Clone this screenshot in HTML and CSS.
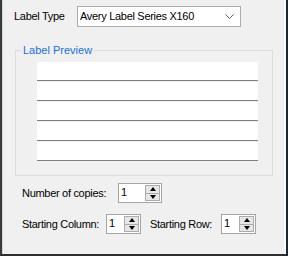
FILE: index.html
```html
<!DOCTYPE html>
<html lang="en">
<head>
    <meta charset="UTF-8">
    <title>Print Labels</title>
    <link rel="stylesheet" href="styles.css">
</head>
<body>
    <div class="window">
        <div class="type-row">
            <span class="caption type-caption">Label Type</span>
            <div class="combo">
                <span class="combo-text">Avery Label Series X160</span>
                <svg class="chevron" width="9" height="5" viewBox="0 0 9 5">
                    <polyline points="0.5,0.5 4.5,4.5 8.5,0.5" fill="none" stroke="#606060" stroke-width="1"/>
                </svg>
            </div>
        </div>

        <fieldset class="group">
            <legend>Label Preview</legend>
            <div class="preview">
                <div class="label-row"></div>
                <div class="label-row"></div>
                <div class="label-row"></div>
                <div class="label-row"></div>
                <div class="label-row"></div>
            </div>
        </fieldset>

        <div class="field-row first">
            <span class="caption copies-caption">Number of copies:</span>
            <div class="spinner wide">
                <span class="spin-value">1</span>
                <div class="spin-buttons">
                    <div class="spin-btn"><span class="arrow up"></span></div>
                    <div class="spin-btn"><span class="arrow down"></span></div>
                </div>
            </div>
        </div>

        <div class="field-row">
            <span class="caption column-caption">Starting Column:</span>
            <div class="spinner">
                <span class="spin-value">1</span>
                <div class="spin-buttons">
                    <div class="spin-btn"><span class="arrow up"></span></div>
                    <div class="spin-btn"><span class="arrow down"></span></div>
                </div>
            </div>
            <span class="caption row-caption">Starting Row:</span>
            <div class="spinner">
                <span class="spin-value">1</span>
                <div class="spin-buttons">
                    <div class="spin-btn"><span class="arrow up"></span></div>
                    <div class="spin-btn"><span class="arrow down"></span></div>
                </div>
            </div>
        </div>
    </div>
</body>
</html>
```

FILE: styles.css
```css
* {
    margin: 0;
    padding: 0;
    box-sizing: border-box;
    font-family: 'Liberation Sans', Arial, sans-serif;
}

body {
    width: 288px;
    height: 256px;
    overflow: hidden;
}

.window {
    width: 288px;
    height: 256px;
    background: #f0f0f0;
    border-left: 2px solid #3a3a3a;
    border-right: 2px solid #1e2738;
    border-bottom: 2px solid #2e2e2e;
    box-shadow: inset 1px 0 0 #d6d6d6, inset -2px 0 0 #fbfbfb;
    font-size: 11px;
    letter-spacing: -0.3px;
    color: #000;
}

.caption {
    display: inline-block;
    line-height: 13px;
    white-space: nowrap;
}

/* label type */
.type-row {
    display: flex;
    align-items: center;
    padding: 6px 0 0 12px;
}

.type-caption {
    width: 63px;
}

.combo {
    width: 164px;
    height: 21px;
    background: #fff;
    border: 1px solid #acacac;
    display: flex;
    align-items: center;
    justify-content: space-between;
    padding: 0 6px 0 2px;
}

.combo-text {
    line-height: 13px;
}

/* group box */
.group {
    margin: 17px 13px 0 13px;
    border: 1px solid #dcdcdc;
    padding: 6px 14px 13px 5px;
}

.group legend {
    padding: 0 2px;
    color: #1a6fd8;
    line-height: 12px;
    letter-spacing: 0;
}

.preview {
    margin-left: 16px;
}

.label-row {
    height: 19px;
    background: #fff;
    border-bottom: 1px solid #7f7f7f;
    margin-bottom: 1px;
}

/* numeric fields */
.field-row {
    display: flex;
    align-items: center;
    padding-left: 20px;
    margin-top: 11px;
}

.field-row.first {
    margin-top: 7px;
}

.copies-caption {
    width: 96px;
}

.column-caption {
    width: 84px;
}

.row-caption {
    width: 71px;
    margin-left: 9px;
}

.spinner {
    width: 35px;
    height: 20px;
    display: flex;
    border: 1px solid #a5a5a5;
    background: #fff;
}

.spinner.wide {
    width: 44px;
}

.spin-value {
    flex: 1;
    line-height: 17px;
    padding-left: 2px;
}

.spin-buttons {
    width: 16px;
    display: flex;
    flex-direction: column;
    padding: 1px 1px 1px 0;
}

.spin-btn {
    flex: 1;
    background: #e6e6e6;
    border: 1px solid #acacac;
    display: flex;
    align-items: center;
    justify-content: center;
}

.spin-btn + .spin-btn {
    border-top: none;
}

.arrow {
    width: 0;
    height: 0;
    border-left: 3px solid transparent;
    border-right: 3px solid transparent;
}

.arrow.up {
    border-bottom: 4px solid #000;
}

.arrow.down {
    border-top: 4px solid #000;
}
```
